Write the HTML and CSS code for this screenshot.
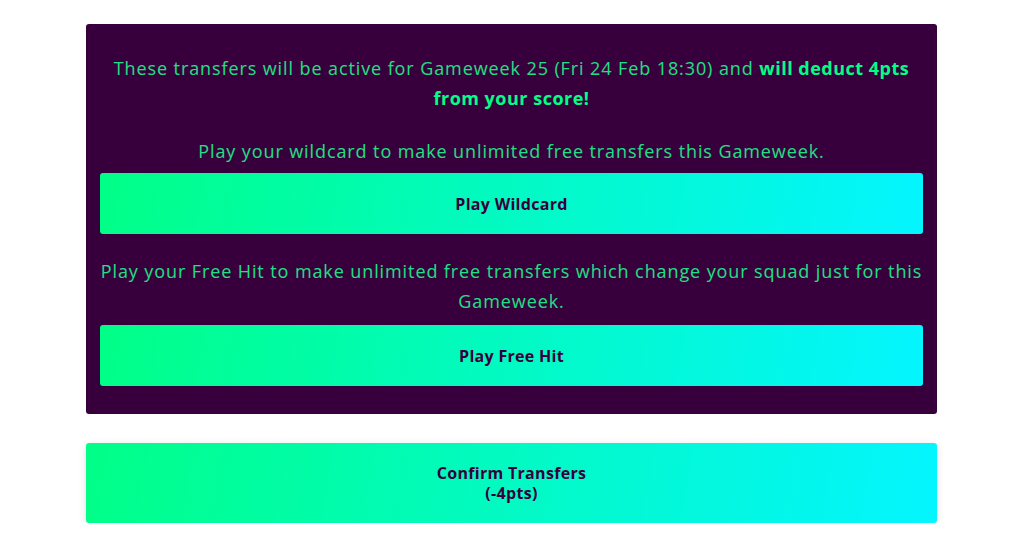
FILE: index.html
```html
<!DOCTYPE html>
<html lang="en">
<head>
<meta charset="utf-8">
<title>Transfers</title>
<link rel="stylesheet" href="styles.css">
</head>
<body>
<main class="wrap">
  <section class="panel">
    <p class="msg first">These transfers will be active for Gameweek 25 (Fri 24 Feb 18:30) and <strong>will deduct 4pts from your score!</strong></p>
    <p class="msg">Play your wildcard to make unlimited free transfers this Gameweek.</p>
    <button class="btn chip">Play Wildcard</button>
    <p class="msg">Play your Free Hit to make unlimited free transfers which change your squad just for this Gameweek.</p>
    <button class="btn chip">Play Free Hit</button>
  </section>
  <button class="btn confirm">Confirm Transfers<br>(-4pts)</button>
</main>
</body>
</html>
```

FILE: styles.css
```css
* { box-sizing: border-box; }
html, body { margin: 0; padding: 0; background: #fff; }
body { font-family: "Open Sans", "Liberation Sans", sans-serif; }
.wrap {
  width: 851px;
  margin: 24px 0 0 86px;
  display: flex;
  flex-direction: column;
}
.panel {
  background: #37003c;
  border-radius: 3px;
  padding: 29px 14px 28px;
  display: flex;
  flex-direction: column;
}
.msg {
  margin: 23px 0 7px;
  color: #1fe084;
  font-size: 18px;
  line-height: 30px;
  letter-spacing: 0.9px;
  text-align: center;
}
.msg.first { margin-top: 0; margin-bottom: 0; }
.msg strong { color: #00ff87; font-weight: 700; letter-spacing: 0.5px; }
.btn {
  border: 0;
  border-radius: 3px;
  background: linear-gradient(100deg, #00ff87 0%, #04f5ff 100%);
  color: #37003c;
  font-family: inherit;
  font-weight: 700;
  font-size: 16px;
  line-height: 20px;
  letter-spacing: 0.3px;
  text-align: center;
  cursor: pointer;
}
.chip { height: 61px; }
.chip + .msg { margin-top: 22px; margin-bottom: 9px; }
.confirm {
  margin-top: 29px;
  height: 80px;
  box-shadow: 0 2px 8px rgba(0,0,0,0.12);
}
```
